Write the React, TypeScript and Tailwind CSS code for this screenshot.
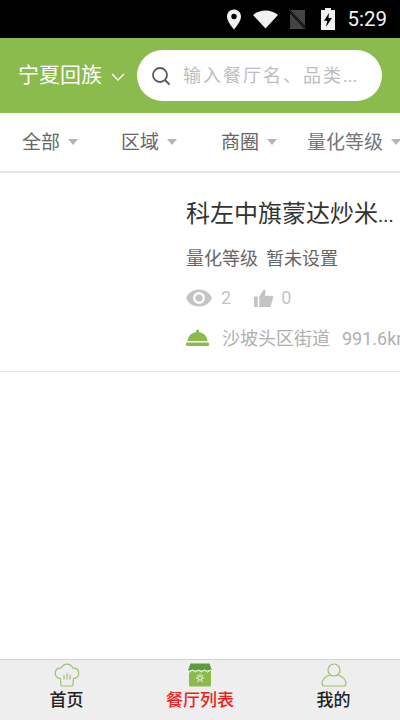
import React from 'react';

const font = { fontFamily: 'Roboto, "Noto Sans CJK SC", sans-serif' };

const filters = ['全部', '区域', '商圈', '量化等级'];

const Caret = () => <span className="ml-2 h-0 w-0 shrink-0 border-x-[5px] border-t-[6px] border-x-transparent border-t-[#b4b4b4]" />;

const ChefHat = () => (
  <svg width="26" height="24" viewBox="0 0 26 24" fill="none" stroke="#9cc46c" strokeWidth="1.2">
    <path d="M6.5 15.5 C3 15 1 12.5 1.3 9.5 C1.6 6.5 4 5 7 5.2 C8.5 2.6 10.5 1.2 13 1.2 C15.5 1.2 17.5 2.6 19 5.2 C22 5 24.4 6.5 24.7 9.5 C25 12.5 23 15 19.5 15.5 L19 22 C19 22.6 18.6 23 18 23 L8 23 C7.4 23 7 22.6 7 22 Z" />
    <path d="M10 12 V16 M13 10.5 V16 M16 12 V16" strokeLinecap="round" />
  </svg>
);

const Shop = () => (
  <svg width="26" height="24" viewBox="0 0 26 24">
    <path d="M3.5 0.5 H22.5 L25 7.5 H1 Z" fill="#5f9a3c" />
    <path d="M2 8 H24 V22 C24 23 23.4 23.5 22.5 23.5 H3.5 C2.6 23.5 2 23 2 22 Z" fill="#8bba4d" />
    <path d="M1 8 Q2.5 10 4 8 T7 8 T10 8 T13 8 T16 8 T19 8 T22 8 T25 8" fill="none" stroke="#fff" strokeWidth="1" />
    <circle cx="13" cy="15" r="2.2" fill="none" stroke="#fff" strokeWidth="1" />
    <path d="M13 10.5 V11.8 M8.8 15 H10 M16 15 H17.2 M10 12 L10.9 12.9 M16 12 L15.1 12.9 M10.5 19 L11.3 17.3 M15.5 19 L14.7 17.3" stroke="#fff" strokeWidth="0.9" />
  </svg>
);

const Person = () => (
  <svg width="26" height="24" viewBox="0 0 26 24" fill="none" stroke="#9cc46c" strokeWidth="1.2">
    <circle cx="13" cy="7" r="6" />
    <path d="M9 12 C4.5 13.5 1.2 16.5 1 20.5 C1 22.2 2 23 3.5 23 H22.5 C24 23 25 22.2 25 20.5 C24.8 16.5 21.5 13.5 17 12" />
  </svg>
);

const App: React.FC = () => {
  return (
    <div className="flex h-[720px] w-[400px] flex-col overflow-hidden bg-white" style={font}>
      {/* status bar */}
      <div className="flex h-[38px] shrink-0 items-center justify-end bg-black pr-[13px] text-white">
        <svg width="14" height="21" viewBox="0 0 14 21" className="mr-[12px]">
          <path fillRule="evenodd" d="M7 0.5 C3 0.5 0 3.6 0 7.5 C0 12 4.5 17.5 7 20.5 C9.5 17.5 14 12 14 7.5 C14 3.6 11 0.5 7 0.5 Z M7 4.8 A2.7 2.7 0 1 1 7 10.2 A2.7 2.7 0 1 1 7 4.8 Z" fill="#f2f2f2" />
        </svg>
        <svg width="25" height="19" viewBox="0 0 25 19" className="mr-[10px]">
          <path d="M12.5 18.5 L0 5 C3.5 2 7.8 0.5 12.5 0.5 C17.2 0.5 21.5 2 25 5 Z" fill="#f2f2f2" />
        </svg>
        <svg width="19" height="21" viewBox="0 0 19 21" className="mr-[14px]">
          <rect x="2" y="1" width="15" height="19" fill="#444444" />
          <path d="M0 0 L19 21" stroke="#000" strokeWidth="2.2" />
          <path d="M1 0.5 L18 20" stroke="#444444" strokeWidth="0.8" />
        </svg>
        <svg width="14" height="22" viewBox="0 0 14 22" className="mr-[12px]">
          <path fillRule="evenodd" d="M4 0 H10 V2 H14 V22 H0 V2 H4 Z M8 5 L3 12.8 H6.2 L5 19 L11 10 H7.5 Z" fill="#f2f2f2" />
        </svg>
        <span className="text-[20.5px] leading-none text-[#f2f2f2]">5:29</span>
      </div>

      {/* header */}
      <div className="flex h-[75px] shrink-0 items-center bg-[#8bba4d] pl-[18px] pr-[18px]">
        <span className="whitespace-nowrap text-[21px] leading-none text-white">宁夏回族</span>
        <svg width="16" height="10" viewBox="0 0 16 10" fill="none" stroke="#fff" strokeWidth="1.4" className="ml-[8px] mt-[2px] shrink-0">
          <path d="M2 2 L8 8 L14 2" />
        </svg>
        <div className="ml-[11px] flex h-[51px] flex-1 items-center rounded-full bg-white pl-[14px]">
          <svg width="20" height="20" viewBox="0 0 20 20" fill="none" stroke="#5b5b5b" strokeWidth="1.8" className="shrink-0">
            <circle cx="9" cy="9" r="7" />
            <path d="M14.5 14.5 L18 18" strokeLinecap="round" />
          </svg>
          <span className="ml-[12px] whitespace-nowrap text-[18px] leading-none tracking-[2px] text-[#bdbdbd]">输入餐厅名、品类<span className="tracking-normal">...</span></span>
        </div>
      </div>

      {/* filters */}
      <div className="flex h-[60px] shrink-0 items-center overflow-hidden border-b-2 border-[#e3e3e3] pl-[22px]">
        {filters.map((f, i) => (
          <div key={f} className={`flex shrink-0 items-center ${i === 3 ? 'w-[94px]' : i === 2 ? 'w-[86px]' : i === 0 ? 'w-[99px]' : 'w-[100px]'}`}>
            <span className={`whitespace-nowrap text-[19px] leading-none ${i === 3 ? 'text-[#757575]' : 'text-[#666666]'}`}>{f}</span>
            <Caret />
          </div>
        ))}
      </div>

      {/* list item */}
      <div className="flex h-[199px] shrink-0 flex-col overflow-hidden border-b border-[#e6e6e6] pl-[186px] pt-[26px]">
        <div className="whitespace-nowrap text-[24px] leading-[30px] text-[#333333]">科左中旗蒙达炒米<span className="text-[20px]">...</span></div>
        <div className="mt-[16px] whitespace-nowrap text-[18px] leading-[26px] text-[#666666]">量化等级<span className="ml-[8px]">暂未设置</span></div>
        <div className="mt-[14px] flex h-[24px] items-center text-[18px] leading-none text-[#c4c4c4]">
          <svg width="26" height="18" viewBox="0 0 26 18" fill="#c4c4c4" className="shrink-0">
            <path fillRule="evenodd" d="M13 0.5 C7 0.5 2.2 4 0 9 C2.2 14 7 17.5 13 17.5 C19 17.5 23.8 14 26 9 C23.8 4 19 0.5 13 0.5 Z M13 3 A6 6 0 1 1 13 15 A6 6 0 1 1 13 3 Z" />
            <circle cx="13" cy="9" r="3.6" />
          </svg>
          <span className="ml-[9px]">2</span>
          <svg width="21" height="21" viewBox="0 0 22 22" fill="#c4c4c4" className="ml-[22px] shrink-0">
            <path d="M1 9 H5 V20 H1 Z M6.5 9 L11 2 C12.5 1.5 13.5 2.5 13.2 4 L12.5 8 H19.5 C20.8 8 21.3 9 21 10 L18.8 18.8 C18.5 19.6 18 20 17 20 H6.5 Z" />
          </svg>
          <span className="ml-[7px]">0</span>
        </div>
        <div className="mt-[16px] flex h-[26px] items-center whitespace-nowrap text-[18px] leading-none text-[#b0b0b0]">
          <svg width="23" height="18" viewBox="0 0 23 18" fill="#8bba4d" className="mb-[3px] shrink-0">
            <circle cx="11.5" cy="2" r="1.6" />
            <path d="M1.5 12 C2 6.5 6 3 11.5 3 C17 3 21 6.5 21.5 12 Z" />
            <rect x="0" y="13.5" width="23" height="3.5" rx="1" />
          </svg>
          <span className="ml-[13px]">沙坡头区街道</span>
          <span className="ml-[12px]">991.6km</span>
        </div>
      </div>

      <div className="flex-1" />

      {/* tab bar */}
      <div className="flex h-[61px] shrink-0 border-t border-[#d4d4d4] bg-[#eeeeee]">
        <div className="flex w-[133px] flex-col items-center pt-[3px]">
          <ChefHat />
          <span className="mt-[2px] text-[17px] font-medium leading-[22px] text-[#222222]">首页</span>
        </div>
        <div className="flex w-[134px] flex-col items-center pt-[3px]">
          <Shop />
          <span className="mt-[2px] text-[17px] font-medium leading-[22px] text-[#f01c1c]">餐厅列表</span>
        </div>
        <div className="flex w-[133px] flex-col items-center pt-[3px]">
          <Person />
          <span className="mt-[2px] text-[17px] font-medium leading-[22px] text-[#222222]">我的</span>
        </div>
      </div>
    </div>
  );
};

export default App;
